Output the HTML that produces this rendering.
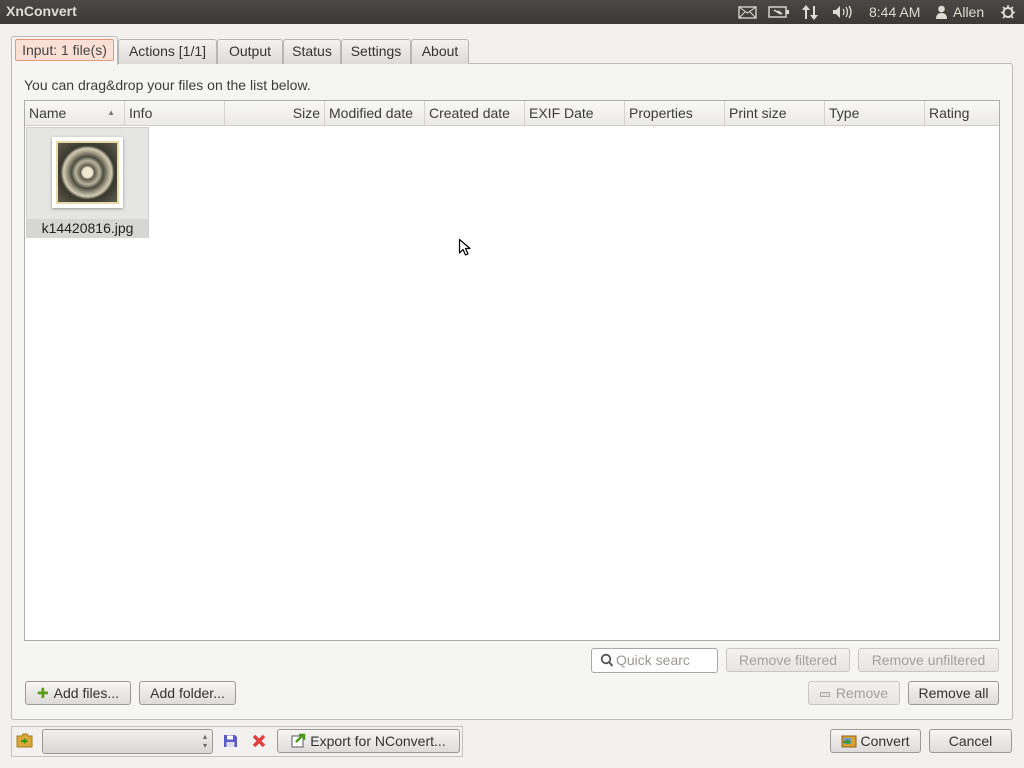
<!DOCTYPE html>
<html><head><meta charset="utf-8"><style>
*{box-sizing:border-box;margin:0;padding:0}
body{width:1024px;height:768px;overflow:hidden;background:#f2f1f0;font-family:"Liberation Sans","DejaVu Sans",sans-serif;font-size:14px;color:#3c3c3c;position:relative}
.a{position:absolute}
#top{left:0;top:0;width:1024px;height:24px;background:linear-gradient(#4a4945,#3a3935);color:#dfdbd2}
.tab{position:absolute;top:39px;height:25px;border:1px solid #b8b6b2;border-bottom:none;background:linear-gradient(#f4f3f2,#dddbd8);border-radius:3px 3px 0 0;text-align:center;line-height:23px;color:#333}
.btn{position:absolute;height:24px;border:1px solid #9d9a96;border-radius:3px;background:linear-gradient(#f7f6f5,#dedcda);line-height:22px;text-align:center;color:#333}
.dis{color:#a3a19e;border-color:#c9c7c4;background:linear-gradient(#f3f2f1,#e6e5e3)}
.hd{position:absolute;top:0;height:24px;border-right:1px solid #d6d4d1;line-height:24px;padding:0 4px;color:#3c3c3c}
</style></head><body>
<div id="top" class="a">
<div class="a" style="left:6px;top:3px;font-weight:bold;font-size:14px;color:#dfdbd2">XnConvert</div>
<svg class="a" style="left:738px;top:6px" width="20" height="13"><rect x="1" y="1" width="17" height="11" fill="none" stroke="#dfdbd2" stroke-width="1.3"/><path d="M1 1 L9.5 7 L18 1 M1 12 L7 6 M18 12 L12 6" stroke="#dfdbd2" fill="none"/></svg>
<svg class="a" style="left:768px;top:6px" width="22" height="12"><rect x="1" y="1" width="17" height="10" fill="none" stroke="#dfdbd2" stroke-width="1.4"/><rect x="18" y="4" width="3" height="4" fill="#dfdbd2"/><path d="M6 4 L11 7 L10 5 L14 8" stroke="#dfdbd2" fill="none" stroke-width="1.5"/></svg>
<svg class="a" style="left:800px;top:4px" width="20" height="17"><path d="M6 1 L2 6 H5 V15 H7 V6 H10Z M14 16 L18 11 H15 V2 H13 V11 H10Z" fill="#dfdbd2"/></svg>
<svg class="a" style="left:832px;top:5px" width="22" height="14"><path d="M1 5 H4 L8 1 V13 L4 9 H1Z" fill="#dfdbd2"/><path d="M11 4 Q13 7 11 10 M14 2 Q17 7 14 12 M17 1 Q21 7 17 13" stroke="#dfdbd2" fill="none" stroke-width="1.3"/></svg>
<div class="a" style="left:869px;top:4px;font-size:14px">8:44 AM</div>
<svg class="a" style="left:935px;top:5px" width="13" height="14"><circle cx="6.5" cy="4" r="3.3" fill="#dfdbd2"/><path d="M1 14 Q1 8 6.5 8 Q12 8 12 14Z" fill="#dfdbd2"/></svg>
<div class="a" style="left:953px;top:4px;font-size:14px">Allen</div>
<svg class="a" style="left:1000px;top:4px" width="16" height="16"><circle cx="8" cy="8.5" r="4.5" fill="none" stroke="#dfdbd2" stroke-width="2"/><path d="M8 1V5 M1 8.5H3 M13 8.5H15 M3 3L4.5 4.5 M13 3L11.5 4.5 M3 14L4.5 12.5 M13 14L11.5 12.5" stroke="#dfdbd2" stroke-width="1.6"/></svg>
</div>

<div class="a" style="left:11px;top:63px;width:1002px;height:657px;border:1px solid #bcbab6;border-radius:0 3px 3px 3px;background:#f5f5f4"></div>
<div class="a" style="left:11px;top:36px;width:107px;height:29px;border:1px solid #bcbab6;border-bottom:none;border-radius:3px 3px 0 0;background:#f5f5f4"></div>
<div class="a" style="left:15px;top:39px;width:99px;height:22px;border:1px solid #e8957a;border-radius:2px;background:#fbe0d6;line-height:20px;text-align:center;color:#444">Input: 1 file(s)</div>
<div class="tab" style="left:118px;width:99px">Actions [1/1]</div>
<div class="tab" style="left:217px;width:66px">Output</div>
<div class="tab" style="left:283px;width:58px">Status</div>
<div class="tab" style="left:341px;width:70px">Settings</div>
<div class="tab" style="left:411px;width:58px">About</div>

<div class="a" style="left:24px;top:77px;color:#3c3c3c">You can drag&amp;drop your files on the list below.</div>

<div class="a" style="left:24px;top:100px;width:976px;height:541px;border:1px solid #b0aeab;background:#fff">
<div class="a" style="left:0;top:0;width:974px;height:25px;background:linear-gradient(#f8f8f7,#ebeae8);border-bottom:1px solid #d0cecb">
<div class="hd" style="left:0;width:100px">Name<span style="position:absolute;right:9px;top:0;font-size:8px;color:#777">▲</span></div>
<div class="hd" style="left:100px;width:100px">Info</div>
<div class="hd" style="left:200px;width:100px;text-align:right">Size</div>
<div class="hd" style="left:300px;width:100px">Modified date</div>
<div class="hd" style="left:400px;width:100px">Created date</div>
<div class="hd" style="left:500px;width:100px">EXIF Date</div>
<div class="hd" style="left:600px;width:100px">Properties</div>
<div class="hd" style="left:700px;width:100px">Print size</div>
<div class="hd" style="left:800px;width:100px">Type</div>
<div class="hd" style="left:900px;width:75px;border:none">Rating</div>
</div>
<div class="a" style="left:1px;top:26px;width:123px;height:111px;background:#e5e5e4;border:1px solid #cfcfcf">
<div class="a" style="left:25px;top:9px;width:71px;height:71px;background:#fff;box-shadow:0 1px 3px rgba(0,0,0,.35)">
<div class="a" style="left:4px;top:4px;width:63px;height:63px;background:#e8d9a8;padding:2px">
<div style="width:59px;height:59px;background:radial-gradient(circle,#efe8cf 0 5px,#5e5a4c 7px,#b9b39b 12px,#4d4a40 16px,#a8a28b 21px,#d1cbb2 24px,#3a382f 27px,#5c5849 40px)"></div></div></div>
<div class="a" style="left:0;top:91px;width:121px;height:19px;background:#d6d6d5;text-align:center;line-height:19px;color:#222">k14420816.jpg</div>
</div>
</div>

<svg class="a" style="left:458px;top:238px" width="14" height="20"><path d="M1.5 1.5 V15 L5 11.5 L7.5 17 L10 16 L7.5 10.5 H12Z" fill="#fff" stroke="#000" stroke-width="1.2" stroke-linejoin="round"/></svg>

<div class="a" style="left:591px;top:648px;width:127px;height:25px;border:1px solid #aaa8a4;border-radius:3px;background:#fff">
<svg class="a" style="left:8px;top:4px" width="14" height="15"><circle cx="6" cy="6" r="4.3" fill="none" stroke="#555" stroke-width="1.8"/><path d="M9 9 L12.5 13" stroke="#555" stroke-width="2"/></svg>
<span class="a" style="left:24px;top:3px;color:#9a9895">Quick searc</span></div>
<div class="btn dis" style="left:726px;top:648px;width:124px">Remove filtered</div>
<div class="btn dis" style="left:858px;top:648px;width:141px">Remove unfiltered</div>
<div class="btn dis" style="left:808px;top:681px;width:92px"><span style="display:inline-block;width:10px;height:5px;border:1px solid #aaa;background:#ddd;vertical-align:middle;margin-right:6px"></span>Remove</div>
<div class="btn" style="left:908px;top:681px;width:91px">Remove all</div>

<div class="btn" style="left:25px;top:681px;width:106px"><span style="color:#5a9d17;font-weight:bold;margin-right:5px">✚</span>Add files...</div>
<div class="btn" style="left:139px;top:681px;width:97px">Add folder...</div>

<div class="a" style="left:11px;top:726px;width:452px;height:31px;border:1px solid #c5c3c0"></div>
<svg class="a" style="left:16px;top:733px" width="17" height="15"><path d="M1 3 H6 L7 1 H11 L12 3 H16 V14 H1Z" fill="#d9a93a" stroke="#a87b1e"/><path d="M5 8 H10 L8 6 M10 8 L8 10" stroke="#3a9a18" stroke-width="2" fill="none"/></svg>
<div class="a" style="left:42px;top:729px;width:171px;height:25px;border:1px solid #9d9a96;border-radius:3px;background:linear-gradient(#f0efee,#d9d8d6)"><span class="a" style="right:5px;top:2px;font-size:8px;line-height:9px;color:#666">▴<br>▾</span></div>
<svg class="a" style="left:223px;top:734px" width="15" height="14"><path d="M1 1 H12 L14 3 V13 H1Z" fill="#5a5ac8"/><rect x="4" y="1.5" width="6" height="4" fill="#fff"/><rect x="3.5" y="8" width="8" height="5" fill="#dde"/></svg>
<svg class="a" style="left:252px;top:734px" width="14" height="14"><path d="M2 2 L12 12 M12 2 L2 12" stroke="#e04040" stroke-width="3.5"/></svg>
<div class="btn" style="left:277px;top:729px;width:183px"><svg style="vertical-align:-2px;margin-right:4px" width="15" height="15"><rect x="1" y="3" width="11" height="11" fill="#fff" stroke="#556"/><path d="M5 9 L12 2 M8 2 H13 V7" stroke="#4a9a18" stroke-width="2.5" fill="none"/></svg>Export for NConvert...</div>

<div class="btn" style="left:830px;top:729px;width:91px"><svg style="vertical-align:-2px;margin-right:3px" width="16" height="14"><rect x="1" y="2" width="14" height="11" fill="#e0a030" stroke="#8a6420"/><rect x="3" y="4" width="7" height="6" fill="#6a9ad0"/><path d="M2 8 H8 L6 6 M8 8 L6 10" stroke="#3c9a18" stroke-width="2" fill="none"/></svg>Convert</div>
<div class="btn" style="left:929px;top:729px;width:83px">Cancel</div>
</body></html>
